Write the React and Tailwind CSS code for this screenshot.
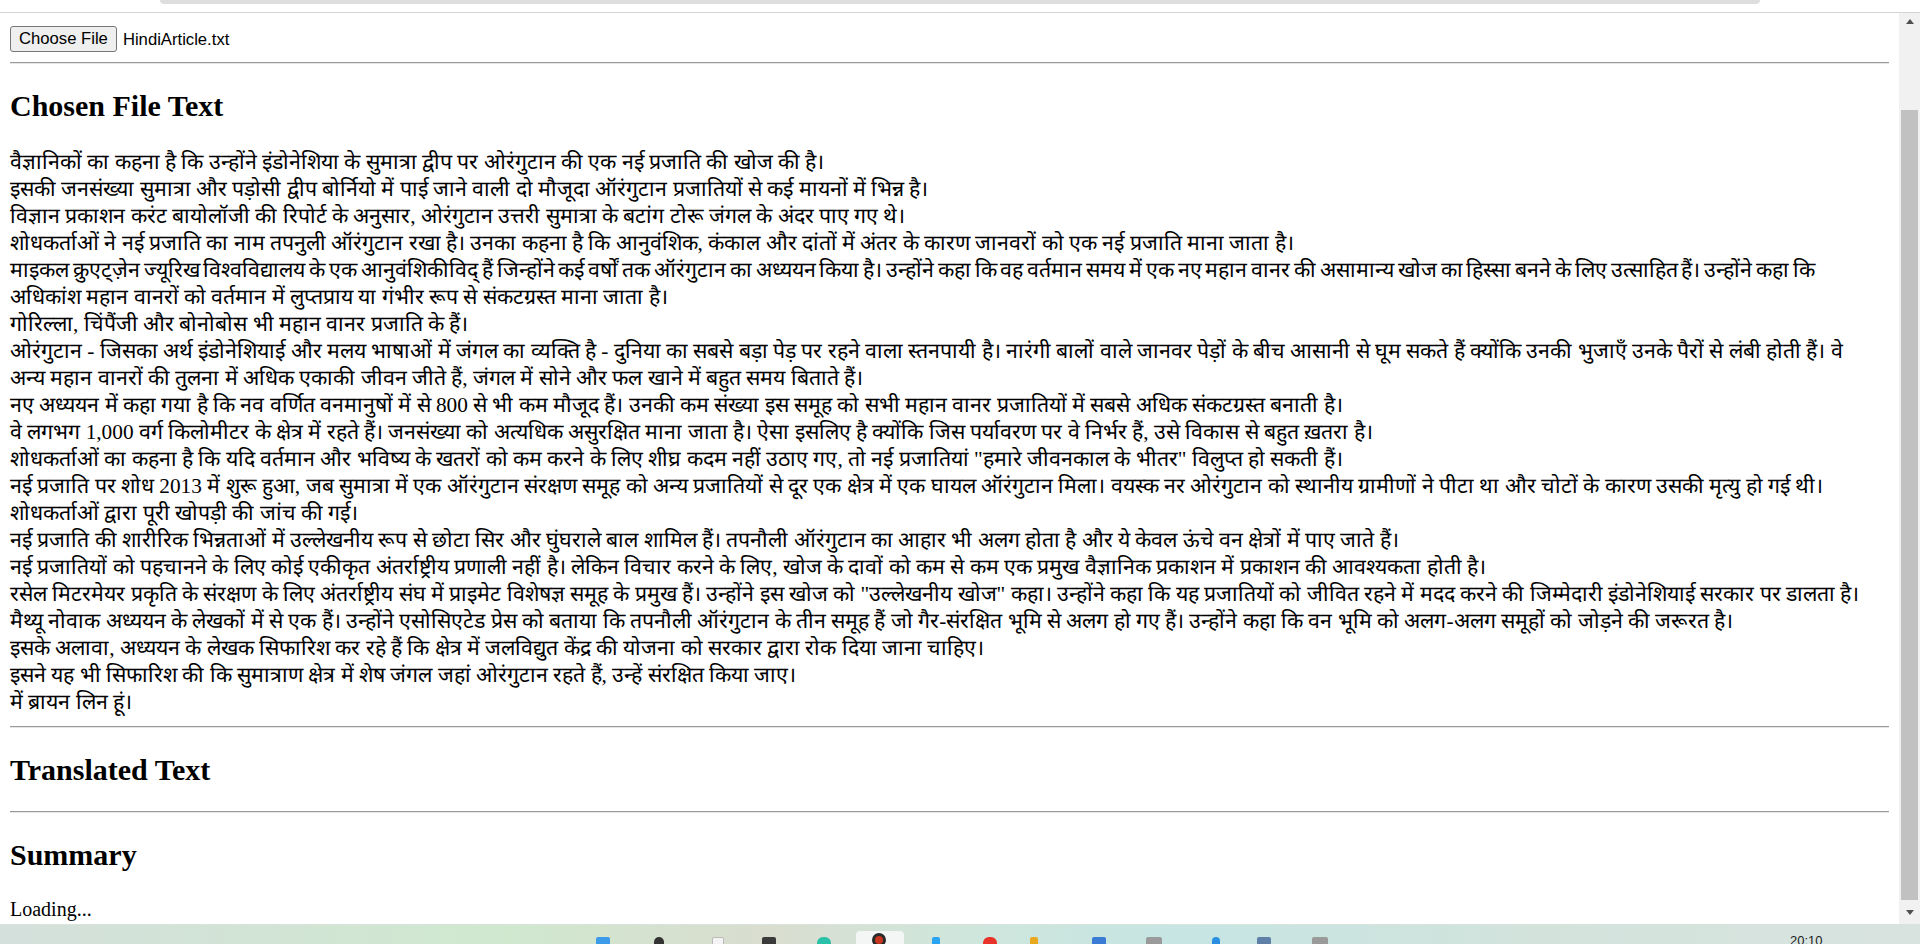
import React from "react";

const lines = [
  "वैज्ञानिकों का कहना है कि उन्होंने इंडोनेशिया के सुमात्रा द्वीप पर ओरंगुटान की एक नई प्रजाति की खोज की है।",
  "इसकी जनसंख्या सुमात्रा और पड़ोसी द्वीप बोर्नियो में पाई जाने वाली दो मौजूदा ऑरंगुटान प्रजातियों से कई मायनों में भिन्न है।",
  "विज्ञान प्रकाशन करंट बायोलॉजी की रिपोर्ट के अनुसार, ओरंगुटान उत्तरी सुमात्रा के बटांग टोरू जंगल के अंदर पाए गए थे।",
  "शोधकर्ताओं ने नई प्रजाति का नाम तपनुली ऑरंगुटान रखा है। उनका कहना है कि आनुवंशिक, कंकाल और दांतों में अंतर के कारण जानवरों को एक नई प्रजाति माना जाता है।",
  "माइकल क्रुएट्ज़ेन ज्यूरिख विश्वविद्यालय के एक आनुवंशिकीविद् हैं जिन्होंने कई वर्षों तक ऑरंगुटान का अध्ययन किया है। उन्होंने कहा कि वह वर्तमान समय में एक नए महान वानर की असामान्य खोज का हिस्सा बनने के लिए उत्साहित हैं। उन्होंने कहा कि",
  "अधिकांश महान वानरों को वर्तमान में लुप्तप्राय या गंभीर रूप से संकटग्रस्त माना जाता है।",
  "गोरिल्ला, चिंपैंजी और बोनोबोस भी महान वानर प्रजाति के हैं।",
  "ओरंगुटान - जिसका अर्थ इंडोनेशियाई और मलय भाषाओं में जंगल का व्यक्ति है - दुनिया का सबसे बड़ा पेड़ पर रहने वाला स्तनपायी है। नारंगी बालों वाले जानवर पेड़ों के बीच आसानी से घूम सकते हैं क्योंकि उनकी भुजाएँ उनके पैरों से लंबी होती हैं। वे",
  "अन्य महान वानरों की तुलना में अधिक एकाकी जीवन जीते हैं, जंगल में सोने और फल खाने में बहुत समय बिताते हैं।",
  "नए अध्ययन में कहा गया है कि नव वर्णित वनमानुषों में से 800 से भी कम मौजूद हैं। उनकी कम संख्या इस समूह को सभी महान वानर प्रजातियों में सबसे अधिक संकटग्रस्त बनाती है।",
  "वे लगभग 1,000 वर्ग किलोमीटर के क्षेत्र में रहते हैं। जनसंख्या को अत्यधिक असुरक्षित माना जाता है। ऐसा इसलिए है क्योंकि जिस पर्यावरण पर वे निर्भर हैं, उसे विकास से बहुत ख़तरा है।",
  "शोधकर्ताओं का कहना है कि यदि वर्तमान और भविष्य के खतरों को कम करने के लिए शीघ्र कदम नहीं उठाए गए, तो नई प्रजातियां \"हमारे जीवनकाल के भीतर\" विलुप्त हो सकती हैं।",
  "नई प्रजाति पर शोध 2013 में शुरू हुआ, जब सुमात्रा में एक ऑरंगुटान संरक्षण समूह को अन्य प्रजातियों से दूर एक क्षेत्र में एक घायल ऑरंगुटान मिला। वयस्क नर ओरंगुटान को स्थानीय ग्रामीणों ने पीटा था और चोटों के कारण उसकी मृत्यु हो गई थी।",
  "शोधकर्ताओं द्वारा पूरी खोपड़ी की जांच की गई।",
  "नई प्रजाति की शारीरिक भिन्नताओं में उल्लेखनीय रूप से छोटा सिर और घुंघराले बाल शामिल हैं। तपनौली ऑरंगुटान का आहार भी अलग होता है और ये केवल ऊंचे वन क्षेत्रों में पाए जाते हैं।",
  "नई प्रजातियों को पहचानने के लिए कोई एकीकृत अंतर्राष्ट्रीय प्रणाली नहीं है। लेकिन विचार करने के लिए, खोज के दावों को कम से कम एक प्रमुख वैज्ञानिक प्रकाशन में प्रकाशन की आवश्यकता होती है।",
  "रसेल मिटरमेयर प्रकृति के संरक्षण के लिए अंतर्राष्ट्रीय संघ में प्राइमेट विशेषज्ञ समूह के प्रमुख हैं। उन्होंने इस खोज को \"उल्लेखनीय खोज\" कहा। उन्होंने कहा कि यह प्रजातियों को जीवित रहने में मदद करने की जिम्मेदारी इंडोनेशियाई सरकार पर डालता है।",
  "मैथ्यू नोवाक अध्ययन के लेखकों में से एक हैं। उन्होंने एसोसिएटेड प्रेस को बताया कि तपनौली ऑरंगुटान के तीन समूह हैं जो गैर-संरक्षित भूमि से अलग हो गए हैं। उन्होंने कहा कि वन भूमि को अलग-अलग समूहों को जोड़ने की जरूरत है।",
  "इसके अलावा, अध्ययन के लेखक सिफारिश कर रहे हैं कि क्षेत्र में जलविद्युत केंद्र की योजना को सरकार द्वारा रोक दिया जाना चाहिए।",
  "इसने यह भी सिफारिश की कि सुमात्राण क्षेत्र में शेष जंगल जहां ओरंगुटान रहते हैं, उन्हें संरक्षित किया जाए।",
  "में ब्रायन लिन हूं।",
];

// taskbar icons, only their tops show
const trayIcons = [
  { x: 596, c: "bg-[#3b9be8]", w: "w-[14px]" },
  { x: 654, c: "bg-[#333]", w: "w-[10px] rounded-full" },
  { x: 712, c: "bg-[#f4f4f4] border border-[#bbb]", w: "w-[12px]" },
  { x: 762, c: "bg-[#3a3a3a]", w: "w-[14px]" },
  { x: 817, c: "bg-[#2bc0a8]", w: "w-[14px] rounded-full" },
  { x: 932, c: "bg-[#2aa3f0]", w: "w-[8px]" },
  { x: 983, c: "bg-[#e8322a]", w: "w-[14px] rounded-full" },
  { x: 1030, c: "bg-[#e9a91f]", w: "w-[8px]" },
  { x: 1092, c: "bg-[#3a7bd5]", w: "w-[14px]" },
  { x: 1146, c: "bg-[#9a9a9a]", w: "w-[16px]" },
  { x: 1212, c: "bg-[#2a8fe0]", w: "w-[8px] rounded-t-full" },
  { x: 1257, c: "bg-[#5d7fa8]", w: "w-[14px]" },
  { x: 1312, c: "bg-[#9a9a9a]", w: "w-[16px]" },
];

const Hr = ({ className = "" }) => (
  <div className={`border-t border-t-[#9a9a9a] border-b border-b-[#e6e6e6] ${className}`} />
);

const App = () => {
  return (
    <div className="w-[1920px] h-[944px] overflow-hidden flex flex-col bg-white font-['Liberation_Serif',serif] text-black">
      {/* browser chrome edge */}
      <div className="h-[13px] shrink-0 relative border-b border-[#d4d4d4] bg-white">
        <div className="absolute left-[160px] right-[160px] top-0 h-[4px] bg-[#dedede] rounded-b-[14px]" />
      </div>

      <div className="flex flex-1 min-h-0">
        {/* page */}
        <div className="flex-1 min-w-0 overflow-hidden px-[10px]">
          <div className="mt-[13px] flex items-center h-[26px] gap-[6px]">
            <button className="h-[26px] px-[8px] bg-[#efefef] border border-[#767676] rounded-[3px] font-['Liberation_Sans',Arial,sans-serif] text-[16.67px] leading-none text-black">
              Choose File
            </button>
            <span className="font-['Liberation_Sans',Arial,sans-serif] text-[16.67px]">HindiArticle.txt</span>
          </div>
          <Hr className="mt-[10px]" />

          <h2 className="mt-[25px] text-[30px] leading-[34.5px] font-bold">Chosen File Text</h2>
          <div className="mt-[25px] text-[21.3px] leading-[27px] whitespace-nowrap">
            {lines.map((l, i) => (
              <div key={i} className={i === 4 ? "[word-spacing:-1.5px]" : ""}>
                {l}
              </div>
            ))}
          </div>
          <Hr className="mt-[10px]" />

          <h2 className="mt-[25px] text-[30px] leading-[34.5px] font-bold">Translated Text</h2>
          <Hr className="mt-[24px]" />

          <h2 className="mt-[25px] text-[30px] leading-[34.5px] font-bold">Summary</h2>
          <p className="mt-[25px] text-[20px] leading-[23px]">Loading...</p>
        </div>

        {/* scrollbar */}
        <div className="w-[21px] shrink-0 bg-[#f1f1f1] flex flex-col items-center">
          <div className="h-[17px] w-full flex items-center justify-center">
            <div className="w-0 h-0 border-l-[4px] border-r-[4px] border-b-[5px] border-l-transparent border-r-transparent border-b-[#505050]" />
          </div>
          <div className="h-[80px]" />
          <div className="h-[790px] w-[17px] bg-[#c1c1c1]" />
          <div className="flex-1 w-full flex items-center justify-center">
            <div className="w-0 h-0 border-l-[4px] border-r-[4px] border-t-[5px] border-l-transparent border-r-transparent border-t-[#505050]" />
          </div>
        </div>
      </div>

      {/* taskbar */}
      <div className="h-[20px] shrink-0 relative bg-[linear-gradient(90deg,#d4e0dc_0%,#d0e8cf_26%,#d9ddcf_40%,#cfe6dc_50%,#c6e5e3_62%,#d3e3dc_80%,#d8e3df_100%)] border-t border-[#d8e4dc]">
        <div className="absolute left-[856px] top-[6px] w-[48px] h-[20px] rounded-[4px] bg-[#f3f6f4]" />
        <div className="absolute left-[872px] top-[8px] w-[14px] h-[14px] rounded-full bg-[#c8361f] border-[3px] border-[#2a2a2a]" />
        {trayIcons.map((ic, i) => (
          <div
            key={i}
            className={`absolute top-[12px] h-[12px] rounded-[2px] ${ic.c} ${ic.w}`}
            style={{ left: ic.x }}
          />
        ))}
        <span className="absolute left-[1790px] top-[9px] font-['Liberation_Sans',Arial,sans-serif] text-[13px] leading-none text-[#222]">
          20:10
        </span>
      </div>
    </div>
  );
};

export default App;
